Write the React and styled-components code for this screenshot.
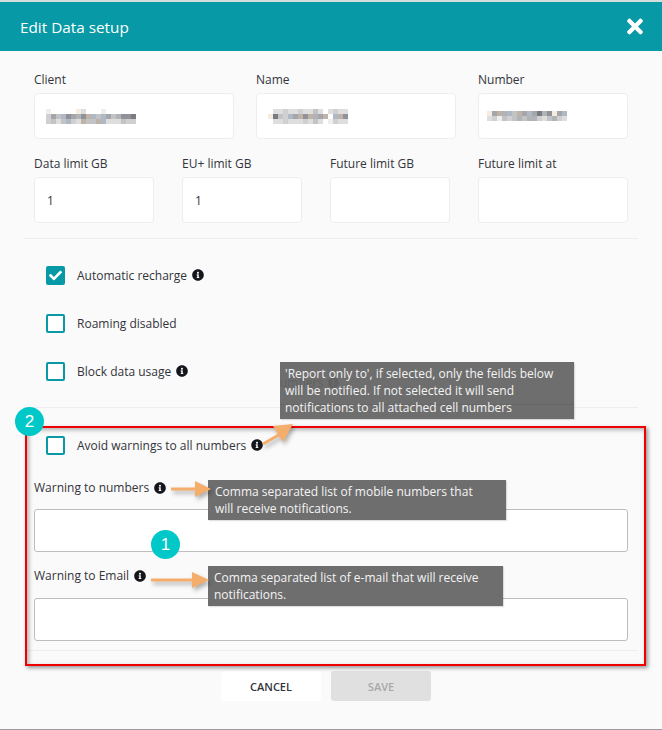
import React from 'react'
import styled, { createGlobalStyle } from 'styled-components'
import { FaCheck, FaInfoCircle, FaTimes } from 'react-icons/fa'

const MOSAIC_COLORS = {
    '.': 'transparent',
    a: '#eeeeee',
    b: '#dedede',
    c: '#d0d0d2',
    d: '#c2c3c5',
    e: '#b2b3b6',
    f: '#a4a6aa',
    g: '#909298',
    h: '#7b7c82',
    i: '#afb9c5',
    j: '#bfb3a8',
    k: '#f6ebe0',
}

const CLIENT_BLUR = [
    'a.....kb...a.......',
    'cfdigfegjidifdeggh.',
    'cdbdicbjddjibbbdcc.',
]
const NAME_BLUR = [
    '.bbcbbcbbdb.bcbb',
    'khdcifjgjefj.ijg',
    '.bbcbbbcbdb.acbb',
]
const NUMBER_BLUR = [
    'kfjeidjfifhegkfi',
    'bcadcdedeecbdecb',
]

const Mosaic = ({ rows, cell = 5 }) => (
    <svg width={rows[0].length * cell} height={rows.length * cell} aria-hidden="true">
        {rows.map((row, y) =>
            row.split('').map((c, x) => (
                <rect key={`${x}-${y}`} x={x * cell} y={y * cell} width={cell} height={cell} fill={MOSAIC_COLORS[c]} />
            ))
        )}
    </svg>
)

const Arrow = ({ className, width, height, points, head }) => (
    <svg className={className} width={width} height={height} aria-hidden="true">
        <polyline points={points} fill="none" stroke="#f5ad6c" strokeWidth="3" />
        <polygon points={head} fill="#f5ad6c" />
    </svg>
)

const App = () => {
    return (
        <Page>
            <GlobalStyle />
            <Header>
                <Title>Edit Data setup</Title>
                <CloseIcon />
            </Header>

            <Body>
                <FieldRow $top="20px">
                    <Field $width="200px">
                        <Label>Client</Label>
                        <TextBox $inset="11px"><Mosaic rows={CLIENT_BLUR} /></TextBox>
                    </Field>
                    <Field $width="200px">
                        <Label>Name</Label>
                        <TextBox $inset="11px"><Mosaic rows={NAME_BLUR} /></TextBox>
                    </Field>
                    <Field $width="150px">
                        <Label>Number</Label>
                        <TextBox $inset="8px"><Mosaic rows={NUMBER_BLUR} /></TextBox>
                    </Field>
                </FieldRow>

                <FieldRow $top="16px" $gap="28px">
                    <Field $width="120px">
                        <Label>Data limit GB</Label>
                        <TextBox>1</TextBox>
                    </Field>
                    <Field $width="120px">
                        <Label>EU+ limit GB</Label>
                        <TextBox>1</TextBox>
                    </Field>
                    <Field $width="120px">
                        <Label>Future limit GB</Label>
                        <TextBox />
                    </Field>
                    <Field $width="150px">
                        <Label>Future limit at</Label>
                        <TextBox />
                    </Field>
                </FieldRow>

                <Divider $top="15px" $bottom="12px" />

                <CheckRow>
                    <CheckBox $checked><FaCheck /></CheckBox>
                    Automatic recharge <Info />
                </CheckRow>
                <CheckRow>
                    <CheckBox />
                    Roaming disabled
                </CheckRow>
                <CheckRow>
                    <CheckBox />
                    Block data usage <Info />
                </CheckRow>

                <Divider $top="12px" $bottom="13px" />

                <CheckRow>
                    <CheckBox />
                    Avoid warnings to all numbers <Info />
                </CheckRow>

                <WideField $top="10px">
                    <Label $gap="12px">Warning to numbers <Info /></Label>
                    <WideBox />
                </WideField>
                <WideField $top="15px">
                    <Label $gap="13px">Warning to Email <Info /></Label>
                    <WideBox />
                </WideField>

                <Divider $top="9px" $bottom="20px" />

                <Buttons>
                    <CancelButton>CANCEL</CancelButton>
                    <SaveButton disabled>SAVE</SaveButton>
                </Buttons>
            </Body>

            <RedFrame />
            <Badge $left="15px" $top="407px">2</Badge>
            <Badge $left="151px" $top="530px">1</Badge>

            <Note $left="280px" $top="362px" $width="294px" $height="57px" $inset="5px">
                <GhostText>umbers <FaInfoCircle /></GhostText>
                <GhostLine />
                <NoteText>'Report only to', if selected, only the feilds below will be notified. If not selected it will send notifications to all attached cell numbers</NoteText>
            </Note>
            <Note $left="208px" $top="480px" $width="298px" $height="40px" $inset="7px">
                <NoteText>Comma separated list of mobile numbers that will receive notifications.</NoteText>
            </Note>
            <Note $left="208px" $top="566px" $width="295px" $height="40px" $inset="6px">
                <NoteText>Comma separated list of e-mail that will receive notifications.</NoteText>
            </Note>

            <PlacedArrow $left="260px" $top="419px" width={36} height={30} points="3,25 22,14" head="33,5 13,7 23,23" />
            <PlacedArrow $left="170px" $top="480px" width={42} height={18} points="1,9 28,9" head="41,9 25,1 25,17" />
            <PlacedArrow $left="150px" $top="571px" width={60} height={18} points="1,9 44,9" head="59,9 42,1 42,17" />
        </Page>
    )
}

export default App

const GlobalStyle = createGlobalStyle`
    html, body {
        margin: 0;
        padding: 0;
    }

    body {
        font-family: "Open Sans", "Noto Sans", sans-serif;
        color: #33343a;
    }
`;

const Page = styled.div`
    position: relative;
    width: 662px;
    height: 730px;
    box-sizing: border-box;
    overflow: hidden;
    padding-top: 2px;
    background: #fafafa;
    border-bottom: 1px solid #9a9a9a;

    &::before {
        content: '';
        position: absolute;
        top: 0;
        left: 0;
        right: 0;
        height: 2px;
        background: #d5dcdc;
    }
`;

const Header = styled.div`
    height: 49px;
    padding: 0 19px 0 20px;
    display: flex;
    align-items: center;
    justify-content: space-between;
    background: #0799a5;
    color: white;
`;

const Title = styled.h1`
    margin: 0;
    font-size: 15.3px;
    font-weight: 400;
`;

const CloseIcon = styled(FaTimes)`
    width: 16px;
    height: 23px;
    color: white;
`;

const Body = styled.div`
    padding: 0 34px;
`;

const FieldRow = styled.div`
    display: flex;
    flex-direction: row;
    gap: ${(props) => props.$gap || '22px'};
    margin-top: ${(props) => props.$top};
`;

const Field = styled.div`
    width: ${(props) => props.$width};
`;

const Label = styled.div`
    height: 18px;
    margin-bottom: ${(props) => props.$gap || '4px'};
    display: flex;
    align-items: center;
    gap: 5px;
    font-size: 12px;
    line-height: 18px;
    white-space: nowrap;
`;

const TextBox = styled.div`
    height: 46px;
    box-sizing: border-box;
    padding: 0 ${(props) => props.$inset || '12px'};
    display: flex;
    align-items: center;
    background: white;
    border: 1px solid #eeeef2;
    border-radius: 4px;
    font-size: 12px;
`;

const Divider = styled.div`
    height: 1px;
    margin: ${(props) => props.$top} -10px ${(props) => props.$bottom};
    background: #eeeef2;
`;

const CheckRow = styled.div`
    height: 48px;
    padding-left: 12px;
    display: flex;
    align-items: center;
    font-size: 12px;
    gap: 5px;
`;

const CheckBox = styled.span`
    width: 19px;
    height: 19px;
    box-sizing: border-box;
    margin-right: 7px;
    display: flex;
    align-items: center;
    justify-content: center;
    border: 2px solid #0799a5;
    border-radius: 2px;
    background: ${(props) => (props.$checked ? '#0799a5' : 'white')};
    color: white;

    svg {
        width: 13px;
        height: 13px;
    }
`;

const Info = styled(FaInfoCircle)`
    width: 12px;
    height: 12px;
    color: #15151c;
`;

const WideField = styled.div`
    margin-top: ${(props) => props.$top};
`;

const WideBox = styled.div`
    height: 43px;
    box-sizing: border-box;
    background: white;
    border: 1px solid #bdbdbd;
    border-radius: 3px;
`;

const Buttons = styled.div`
    display: flex;
    justify-content: center;
    gap: 10px;
    padding-right: 10px;
`;

const CancelButton = styled.button`
    width: 100px;
    height: 30px;
    padding: 0;
    background: white;
    border: 0;
    border-radius: 3px;
    color: #33343a;
    font-family: inherit;
    font-size: 11px;
    font-weight: 600;
`;

const SaveButton = styled(CancelButton)`
    background: #e0e0e0;
    color: #a8a8a8;
`;

const RedFrame = styled.div`
    position: absolute;
    left: 25px;
    top: 426px;
    width: 621px;
    height: 240px;
    box-sizing: border-box;
    border: 2px solid #f00000;
    box-shadow: 2px 2px 4px rgba(0, 0, 0, 0.4), inset 2px 2px 4px rgba(0, 0, 0, 0.3);
`;

const Badge = styled.div`
    position: absolute;
    left: ${(props) => props.$left};
    top: ${(props) => props.$top};
    width: 29px;
    height: 29px;
    display: flex;
    align-items: center;
    justify-content: center;
    border-radius: 50%;
    background: #00c8c8;
    color: white;
    font-family: "Liberation Sans", sans-serif;
    font-size: 17px;
`;

const Note = styled.div`
    position: absolute;
    left: ${(props) => props.$left};
    top: ${(props) => props.$top};
    width: ${(props) => props.$width};
    height: ${(props) => props.$height};
    box-sizing: border-box;
    padding: 3px 14px 0 ${(props) => props.$inset};
    overflow: hidden;
    background: #6e6e6e;
    box-shadow: 1px 1px 1px rgba(0, 0, 0, 0.12);
`;

const NoteText = styled.div`
    position: relative;
    color: #f4f4f4;
    font-size: 12px;
    line-height: 17px;
`;

const GhostText = styled.div`
    position: absolute;
    left: 0;
    top: 12px;
    display: flex;
    align-items: center;
    gap: 5px;
    color: #626262;
    font-size: 12px;
    line-height: 17px;

    svg {
        width: 11px;
        height: 11px;
    }
`;

const GhostLine = styled.div`
    position: absolute;
    left: 0;
    right: 0;
    top: 42px;
    height: 1px;
    background: #676767;
`;

const PlacedArrow = styled(Arrow)`
    position: absolute;
    left: ${(props) => props.$left};
    top: ${(props) => props.$top};
    filter: drop-shadow(2px 3px 2px rgba(0, 0, 0, 0.3));
`;
